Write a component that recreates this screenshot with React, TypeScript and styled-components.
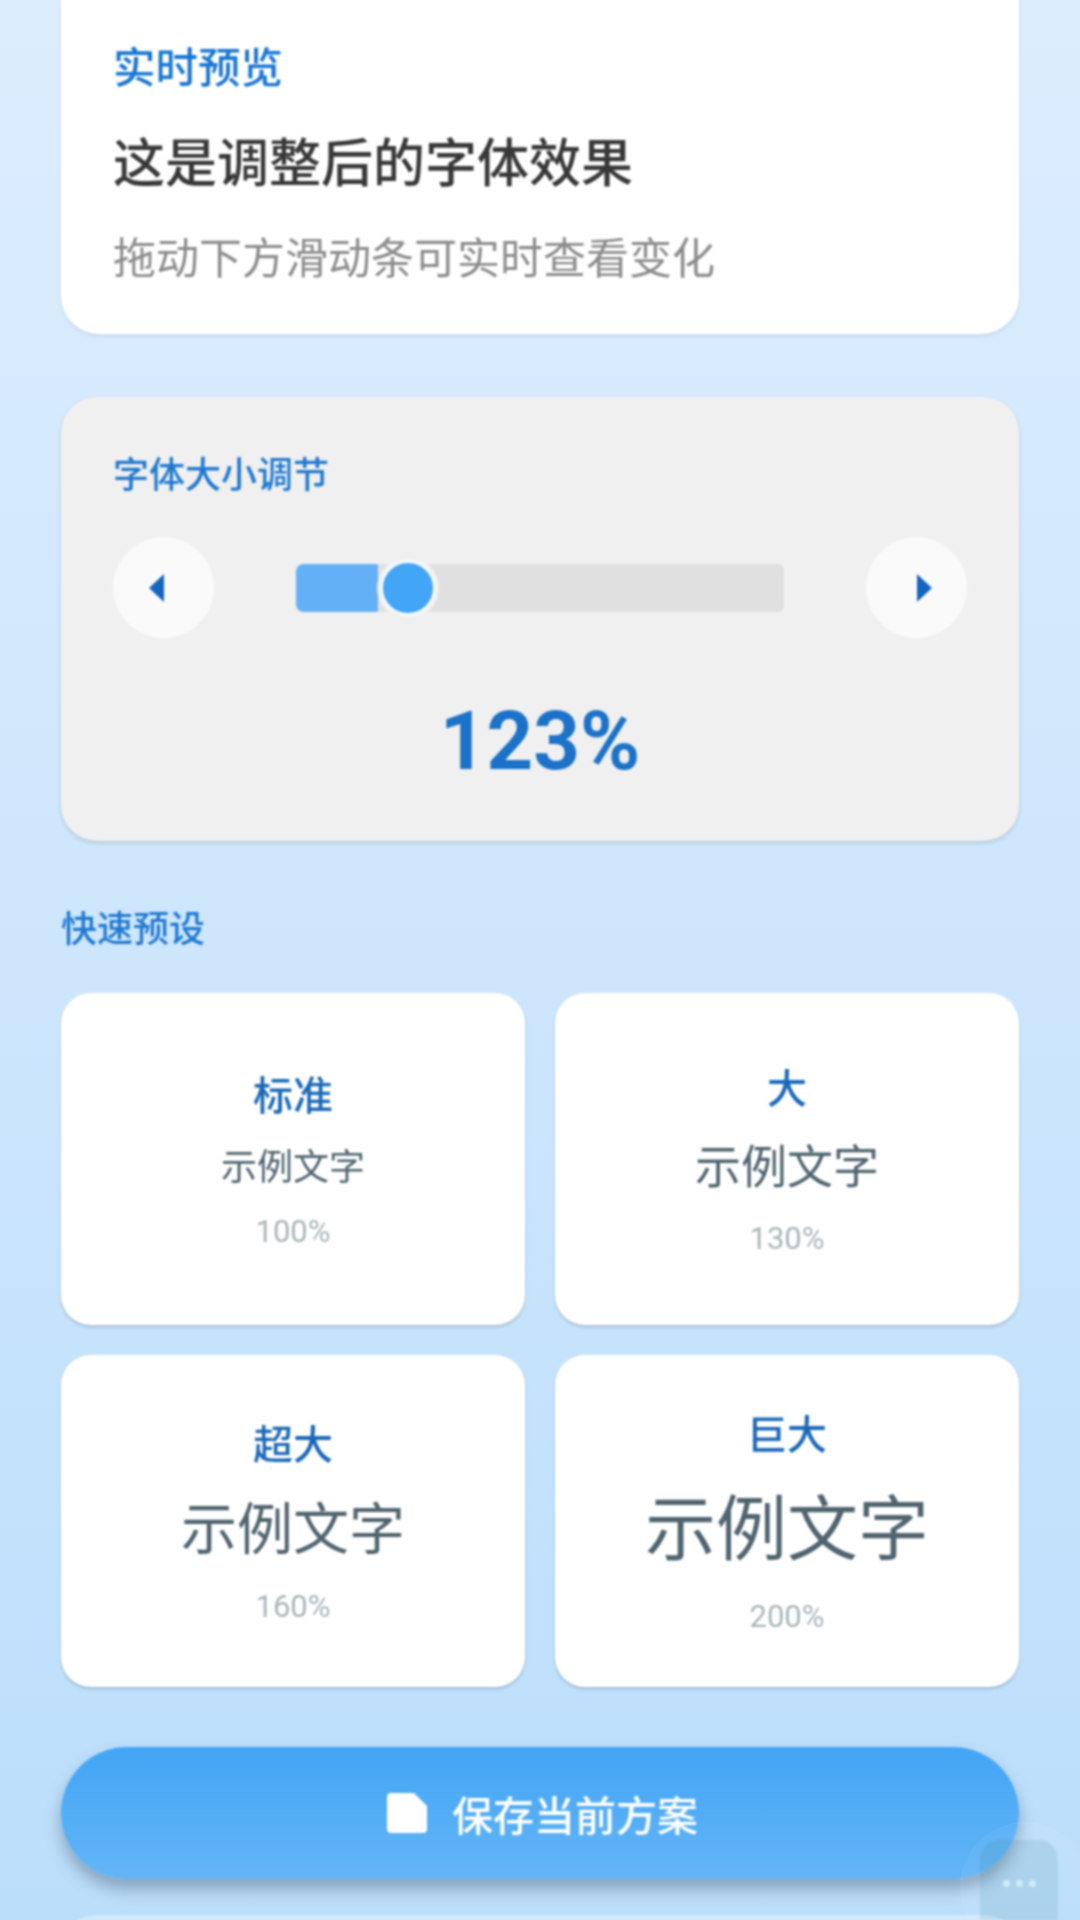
import React from "react";
import styled, { createGlobalStyle } from "styled-components";

const Global = createGlobalStyle`
  html, body { margin: 0; padding: 0; }
  body { font-family: Roboto, "Noto Sans CJK SC", sans-serif; }
`;

const Screen = styled.div`
  position: relative;
  width: 1080px;
  height: 1920px;
  overflow: hidden;
  background: linear-gradient(180deg, #dcedfd 0%, #cde6fc 50%, #bbdefb 100%);
`;

const Content = styled.div`
  display: flex;
  flex-direction: column;
  margin-top: -40px;
  padding: 0 61px;
  filter: blur(0.8px);
`;

const PreviewCard = styled.section`
  display: flex;
  flex-direction: column;
  height: 374px;
  box-sizing: border-box;
  padding: 82px 52px 0;
  background: #fff;
  border-radius: 38px;
  box-shadow: 0 2px 4px rgba(0, 0, 0, 0.08);
`;

const PreviewTitle = styled.div`
  font-size: 42.5px;
  line-height: 54px;
  font-weight: 500;
  color: #1976d2;
`;

const PreviewHeading = styled.div`
  margin-top: 34px;
  font-size: 52px;
  line-height: 70px;
  font-weight: 500;
  color: #383838;
`;

const PreviewSub = styled.div`
  margin-top: 30px;
  font-size: 43px;
  line-height: 58px;
  color: #8c8c8c;
`;

const SliderCard = styled.section`
  display: flex;
  flex-direction: column;
  height: 444px;
  box-sizing: border-box;
  margin-top: 63px;
  padding: 55px 52px 0;
  background: #f0f0f0;
  border-radius: 36px;
  box-shadow: 0 2px 4px rgba(0, 0, 0, 0.14);
`;

const SectionTitle = styled.div`
  font-size: 36px;
  line-height: 48px;
  font-weight: 500;
  color: #2079d0;
`;

const SliderRow = styled.div`
  display: flex;
  align-items: center;
  justify-content: space-between;
  margin-top: 37px;
`;

const RoundButton = styled.div`
  display: flex;
  align-items: center;
  justify-content: center;
  width: 101px;
  height: 101px;
  border-radius: 50%;
  background: #fafafa;
`;

const Track = styled.div`
  position: relative;
  width: 488px;
  height: 48px;
  border-radius: 6px;
  background: #e0e0e0;
`;

const Fill = styled.div`
  width: 82px;
  height: 100%;
  border-radius: 8px 2px 2px 8px;
  background: #64b0f6;
`;

const Thumb = styled.div`
  position: absolute;
  left: 84px;
  top: -4px;
  width: 50px;
  height: 50px;
  border: 3px solid #f6fbff;
  border-radius: 50%;
  background: #42a5f5;
  box-shadow: 0 0 0 3px #f0f0f0;
`;

const Value = styled.div`
  margin-top: 56px;
  text-align: center;
  font-size: 81.5px;
  line-height: 94px;
  font-weight: 700;
  color: #1b72c8;
`;

const PresetHeading = styled(SectionTitle)`
  margin-top: 65px;
`;

const PresetGrid = styled.div`
  display: grid;
  grid-template-columns: 464px 464px;
  grid-auto-rows: 332px;
  gap: 30px;
  margin-top: 39px;
`;

const PresetCard = styled.div`
  display: flex;
  flex-direction: column;
  align-items: center;
  justify-content: center;
  box-sizing: border-box;
  padding-top: 4px;
  background: #fff;
  border-radius: 30px;
  box-shadow: 0 2px 3px rgba(0, 0, 0, 0.18);
`;

const PresetName = styled.div`
  font-size: 40px;
  line-height: 52px;
  font-weight: 500;
  color: #1a68b8;
`;

const PresetSample = styled.div<{ $size: number }>`
  margin-top: 22px;
  font-size: ${(p) => p.$size}px;
  line-height: 1.3;
  color: #4f646e;
`;

const PresetPercent = styled.div`
  margin-top: 22px;
  font-size: 31px;
  line-height: 38px;
  color: #a9b5ba;
`;

const SaveButton = styled.button`
  display: flex;
  align-items: center;
  justify-content: center;
  gap: 25px;
  height: 132px;
  margin-top: 60px;
  padding: 0 0 0 5px;
  border: 0;
  border-radius: 66px;
  background: linear-gradient(180deg, #42a5f5 0%, #64b5f6 100%);
  box-shadow: 0 10px 16px rgba(70, 90, 110, 0.45);
  font-family: inherit;
  font-size: 41px;
  font-weight: 500;
  color: #fff;
`;

const NextCard = styled.div`
  height: 100px;
  margin-top: 36px;
  border-radius: 36px;
  background: #d3e9fd;
`;

const FloatingGhost = styled.div`
  position: absolute;
  left: 960px;
  top: 1822px;
  width: 130px;
  height: 130px;
  border-radius: 50%;
  background: rgba(255, 255, 255, 0.05);
`;

const FloatingHandle = styled.div`
  position: absolute;
  left: 980px;
  top: 1840px;
  display: flex;
  align-items: center;
  justify-content: center;
  gap: 6px;
  width: 78px;
  height: 80px;
  padding-top: 6px;
  box-sizing: border-box;
  border-radius: 20px 20px 0 0;
  background: rgba(40, 120, 130, 0.12);
  filter: blur(1.2px);
`;

const HandleDot = styled.span`
  width: 7px;
  height: 7px;
  border-radius: 50%;
  background: rgba(225, 243, 250, 0.7);
`;

const presets = [
  { name: "标准", size: 36, pct: "100%" },
  { name: "大", size: 46, pct: "130%" },
  { name: "超大", size: 56, pct: "160%" },
  { name: "巨大", size: 71, pct: "200%" },
];

export default function App() {
  return (
    <Screen>
      <Global />
      <Content>
        <PreviewCard>
          <PreviewTitle>实时预览</PreviewTitle>
          <PreviewHeading>这是调整后的字体效果</PreviewHeading>
          <PreviewSub>拖动下方滑动条可实时查看变化</PreviewSub>
        </PreviewCard>
        <SliderCard>
          <SectionTitle>字体大小调节</SectionTitle>
          <SliderRow>
            <RoundButton>
              <svg width="32" height="28" viewBox="0 0 32 28">
                <path d="M16 0V28L1 14Z" fill="#1565c0" />
              </svg>
            </RoundButton>
            <Track>
              <Fill />
              <Thumb />
            </Track>
            <RoundButton>
              <svg width="32" height="28" viewBox="0 0 32 28">
                <path d="M16 0V28L31 14Z" fill="#1565c0" />
              </svg>
            </RoundButton>
          </SliderRow>
          <Value>123%</Value>
        </SliderCard>
        <PresetHeading>快速预设</PresetHeading>
        <PresetGrid>
          {presets.map((p) => (
            <PresetCard key={p.name}>
              <PresetName>{p.name}</PresetName>
              <PresetSample $size={p.size}>示例文字</PresetSample>
              <PresetPercent>{p.pct}</PresetPercent>
            </PresetCard>
          ))}
        </PresetGrid>
        <SaveButton>
          <svg width="40" height="40" viewBox="0 0 40 40">
            <path d="M4 0H27L40 13V36a4 4 0 0 1-4 4H4a4 4 0 0 1-4-4V4a4 4 0 0 1 4-4Z" fill="#fff" />
          </svg>
          保存当前方案
        </SaveButton>
        <NextCard />
      </Content>
      <FloatingGhost />
      <FloatingHandle>
        <HandleDot />
        <HandleDot />
        <HandleDot />
      </FloatingHandle>
    </Screen>
  );
}
